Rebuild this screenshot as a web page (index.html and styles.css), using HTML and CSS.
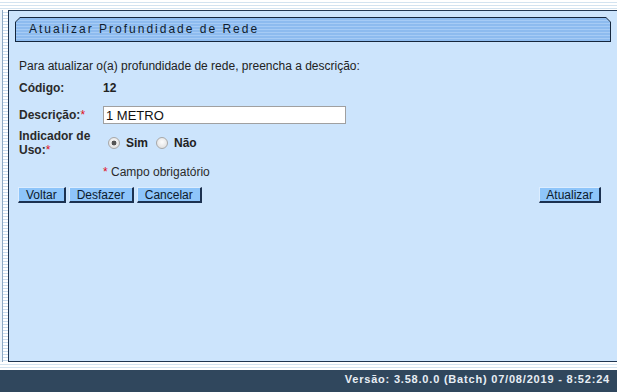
FILE: index.html
```html
<!DOCTYPE html>
<html lang="pt-BR">
<head>
<meta charset="utf-8">
<title>Atualizar Profundidade de Rede</title>
<link rel="stylesheet" href="styles.css">
</head>
<body>
<div class="page">
  <div class="stripes top-stripes"></div>
  <div class="middle">
    <div class="side"></div>
    <main class="panel">
      <div class="title-outer"><div class="title-inner"><span class="title-text">Atualizar Profundidade de Rede</span></div></div>
      <div class="content">
        <p class="intro">Para atualizar o(a) profundidade de rede, preencha a descrição:</p>
        <div class="row row-code">
          <span class="label">Código:</span>
          <span class="value">12</span>
        </div>
        <div class="row row-desc">
          <label class="label" for="desc">Descrição:<span class="req">*</span></label>
          <input id="desc" class="text-input" type="text" value="1 METRO">
        </div>
        <div class="row row-ind">
          <div class="label label-wrap"><div>Indicador de</div><div>Uso:<span class="req">*</span></div></div>
          <div class="radios">
            <label class="radio-opt"><input class="radio" type="radio" name="uso" checked><span>Sim</span></label>
            <label class="radio-opt"><input class="radio" type="radio" name="uso"><span>Não</span></label>
          </div>
        </div>
        <div class="row row-note">
          <span class="label"></span>
          <span class="note"><span class="req">*</span> Campo obrigatório</span>
        </div>
        <div class="buttons">
          <div class="btn-group">
            <button class="btn" type="button">Voltar</button>
            <button class="btn" type="button">Desfazer</button>
            <button class="btn" type="button">Cancelar</button>
          </div>
          <button class="btn btn-main" type="button">Atualizar</button>
        </div>
      </div>
    </main>
  </div>
  <div class="stripes bottom-stripes"></div>
  <footer class="footer">Versão: 3.58.0.0 (Batch) 07/08/2019 - 8:52:24</footer>
</div>
</body>
</html>
```
FILE: styles.css
```css
* { box-sizing: border-box; }
html, body { margin: 0; padding: 0; }
body {
  font-family: "Liberation Sans", Arial, sans-serif;
  font-size: 12px;
  color: #222;
  background: #fff;
}
.page {
  width: 617px;
  height: 392px;
  display: flex;
  flex-direction: column;
  overflow: hidden;
}
.stripes {
  background: repeating-linear-gradient(to bottom, #ffffff 0 2px, #d3e3f0 2px 3px);
}
.top-stripes { height: 10px; }
.bottom-stripes { height: 8px; }
.middle {
  height: 352px;
  display: flex;
}
.side {
  width: 9px;
  border-right: 1px solid #1f3550;
  border-left: 2px solid #eef5fb;
  background:
    linear-gradient(to right, #8fa9c4 0 1px, transparent 1px),
    repeating-linear-gradient(to bottom, #ffffff 0 2px, #c9dcee 2px 3px);
}
.panel {
  flex: 1;
  background: #cce4fc;
  border-top: 1px solid #1f3550;
  border-bottom: 1px solid #1f3550;
}
.title-outer {
  margin: 6px 6px 0 6px;
  height: 25px;
  padding: 1px;
  background: #14263d;
  clip-path: polygon(5px 0, calc(100% - 5px) 0, 100% 5px, 100% 100%, 0 100%, 0 5px);
}
.title-inner {
  height: 23px;
  background: repeating-linear-gradient(to bottom, #8dbbef 0 2px, #a6cbf5 2px 3px);
  clip-path: polygon(4px 0, calc(100% - 4px) 0, 100% 4px, 100% 100%, 0 100%, 0 4px);
  padding-left: 13px;
  line-height: 22px;
}
.title-text {
  font-family: "Liberation Sans", Arial, sans-serif;
  font-size: 12px;
  letter-spacing: 2px;
  color: #0f1c2e;
}
.content {
  padding: 0 15px 0 10px;
}
.intro {
  margin: 17px 0 0 0;
  line-height: 14px;
  height: 14px;
}
.row {
  display: flex;
  align-items: center;
}
.label {
  width: 84px;
  flex: none;
  font-weight: bold;
  color: #2a2a2a;
}
.req { color: #e0101a; font-weight: normal; }
.value { font-weight: bold; }
.row-code { margin-top: 8px; height: 14px; line-height: 14px; }
.row-desc { margin-top: 11px; height: 18px; }
.text-input {
  width: 243px;
  height: 18px;
  border: 1px solid #a0a0a0;
  background: #fff;
  padding: 0 0 0 2px;
  margin: 0;
  font-family: "Liberation Sans", Arial, sans-serif;
  font-size: 13px;
  color: #111;
  outline: none;
}
.row-ind { margin-top: 5px; height: 28px; }
.label-wrap { line-height: 14px; }
.radios { display: flex; align-items: center; padding-left: 5px; }
.radio-opt {
  display: flex;
  align-items: center;
  font-weight: bold;
  margin-right: 8px;
}
.radio {
  -webkit-appearance: none;
  appearance: none;
  width: 12px;
  height: 12px;
  margin: 0 6px 0 0;
  border-radius: 50%;
  border: 1px solid #a8a8a8;
  background: radial-gradient(circle at 50% 40%, #fdfdfd 0, #e4e4e4 70%, #d6d6d6 100%);
}
.radio:checked {
  background:
    radial-gradient(circle, #555 0 2.2px, transparent 2.7px),
    radial-gradient(circle at 50% 40%, #fdfdfd 0, #e4e4e4 70%, #d6d6d6 100%);
}
.row-note { margin-top: 8px; height: 14px; line-height: 14px; }
.note { color: #2a2a2a; }
.buttons {
  margin-top: 8px;
  margin-left: -1px;
  display: flex;
  justify-content: space-between;
}
.btn-group { display: flex; gap: 3px; }
.btn {
  height: 16px;
  padding: 0 7px;
  margin: 0;
  font-family: "Liberation Sans", Arial, sans-serif;
  font-size: 12px;
  line-height: 12px;
  color: #0c1a2c;
  background: #8ec5fa;
  border-style: solid;
  border-width: 1px 2px 2px 1px;
  border-color: #dcedff #1c3150 #1c3150 #dcedff;
  border-radius: 0;
}
.btn-main { padding: 0 6px; margin-right: 1px; }
.footer {
  height: 22px;
  background: #30475d;
  color: #e8eef5;
  font-family: "Liberation Sans", Arial, sans-serif;
  font-weight: bold;
  font-size: 11px;
  letter-spacing: 0.8px;
  line-height: 19px;
  text-align: right;
  padding-right: 7px;
}
```
